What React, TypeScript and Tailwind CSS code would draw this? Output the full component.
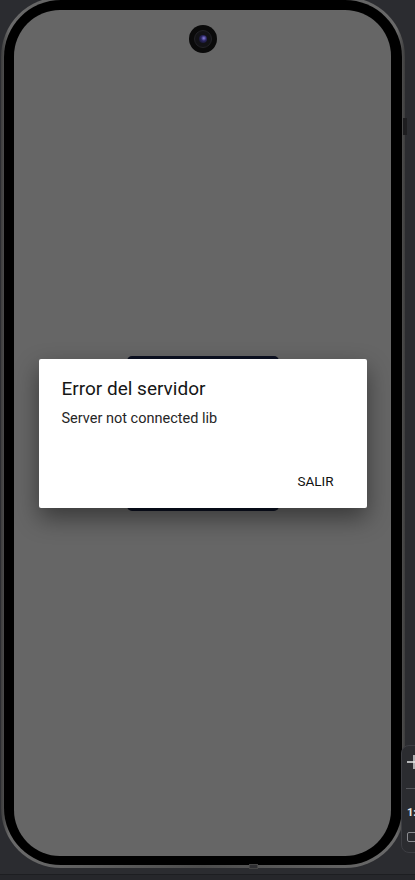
import React from 'react';

const Camera = () => (
  <div className="absolute left-[175px] top-[15px] w-[28px] h-[28px] rounded-full bg-[#0a0a0a] flex items-center justify-center">
    <div className="w-[18px] h-[18px] rounded-full bg-[#121215] border border-[#222226] flex items-center justify-center">
      <div className="w-[8px] h-[8px] rounded-full bg-[radial-gradient(circle_at_60%_40%,#8a80e0_0%,#2a2660_40%,#0c0c14_100%)]" />
    </div>
  </div>
);

const SideToolbar = () => (
  <div className="absolute left-[401px] top-[745px] w-[40px] h-[108px] rounded-lg border border-[#3d3e43] bg-[#2b2c30] flex flex-col pl-[5px] pt-[8px] text-[#e6e6e6]">
    <svg width="14" height="14" viewBox="0 0 14 14" className="mt-[1px]">
      <path d="M7 0v14M0 7h14" stroke="#e6e6e6" strokeWidth="1.4" />
    </svg>
    <div className="w-[30px] h-px bg-[#55565b] mt-[19px] -ml-[1px]" />
    <span className="mt-[17px] text-[11px] leading-[14px] font-bold" style={{ fontFamily: 'Roboto, sans-serif' }}>
      1:
    </span>
    <div className="w-[10px] h-[10px] rounded-[2px] border border-[#8a8b90] mt-[12px]" />
  </div>
);

const ErrorDialog = () => (
  <div className="col-start-1 row-start-1 w-[328px] h-[149px] bg-white rounded-[2px] shadow-[0_10px_24px_rgba(0,0,0,0.45)] flex flex-col pl-[23px] pr-[33px] pt-[17px] pb-[17px] font-['Roboto',sans-serif]">
    <p className="text-[19px] leading-[25px] text-[#161616]">Error del servidor</p>
    <p className="mt-[8px] text-[14.5px] leading-[20px] text-[#262626]">Server not connected lib</p>
    <div className="mt-auto flex justify-end">
      <span className="text-[13.5px] leading-[20px] text-[#111]">SALIR</span>
    </div>
  </div>
);

const App = () => {
  return (
    <div className="relative w-[415px] h-[880px] overflow-hidden bg-[#2b2c30]">
      <div className="relative ml-[1px] -mt-[3px] w-[404px] h-[871px] rounded-[60px] p-[3px] bg-[linear-gradient(90deg,#3c3c3c,#6a6a6a_2%,#4c4c4c_50%,#6a6a6a_98%,#3c3c3c)]">
        <div className="w-full h-full rounded-[57px] bg-black pl-[10px] pr-[11px] pt-[10px] pb-[9px]">
          <div className="relative w-full h-full rounded-[46px] bg-[#666666] grid place-items-center">
            <div className="col-start-1 row-start-1 w-[152px] h-[155px] rounded-[5px] bg-[#0c1122]" />
            <ErrorDialog />
            <Camera />
          </div>
        </div>
        <div className="absolute right-[-2px] top-[121px] w-[4px] h-[17px] bg-[#1e1e20]" />
        <div className="absolute left-[248px] bottom-[-1px] w-[9px] h-[5px] bg-[#2f2f32] border border-[#444]" />
      </div>
      <div className="absolute left-0 right-0 bottom-0 h-[6px] bg-[#26272b] border-t border-[#1d1e21]" />
      <SideToolbar />
    </div>
  );
};

export default App;
